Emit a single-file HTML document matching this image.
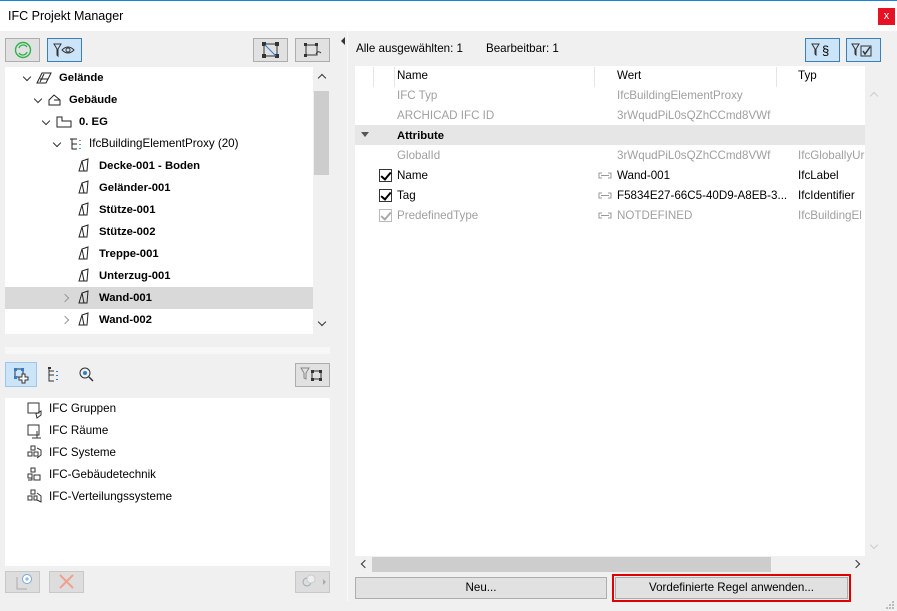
<!DOCTYPE html>
<html><head><meta charset="utf-8"><style>
*{margin:0;padding:0;box-sizing:border-box}
body{width:897px;height:611px;background:#f0f0f0;font-family:"Liberation Sans",sans-serif;font-size:11.6px;color:#000;position:relative;overflow:hidden}
.a{position:absolute}
.btn{position:absolute;background:#e1e1e1;border:1px solid #adadad}
.sel{background:#cce4f7;border:1px solid #3c7fb1}
.t{position:absolute;white-space:nowrap;line-height:14px}
.b{font-weight:bold;font-size:11.3px}
.g{color:#a0a0a0}
.chev{position:absolute;width:6px;height:6px;border-right:1.5px solid #333;border-bottom:1.5px solid #333;transform:rotate(45deg)}
.chr{position:absolute;width:6px;height:6px;border-right:1.5px solid #999;border-bottom:1.5px solid #999;transform:rotate(-45deg)}
.cb{position:absolute;width:13px;height:13px;border:1px solid #333;background:#fff}
.cb:after{content:"";position:absolute;left:3px;top:0px;width:4px;height:8px;border-right:2px solid #000;border-bottom:2px solid #000;transform:rotate(40deg)}
.cbg{border-color:#bbb}.cbg:after{border-color:#aaa}
</style></head><body>
<div class="a" style="left:0;top:0;width:897px;height:1px;background:#1883d7"></div>
<div class="a" style="left:0;top:1px;width:897px;height:30px;background:#fff"></div>
<div class="t" style="left:8px;top:9px;font-size:12.5px">IFC Projekt Manager</div>
<div class="a" style="left:878px;top:8px;width:17px;height:17px;background:#e81123;color:#fff;font-size:11px;text-align:center;line-height:16px">x</div>

<!-- left toolbar -->
<div class="btn" style="left:5px;top:38px;width:35px;height:24px"><svg width="33" height="22"><circle cx="17" cy="11" r="7.5" fill="none" stroke="#2db34a" stroke-width="1.4"/><path d="M13 9a4.5 4.5 0 0 1 8-1M21 13a4.5 4.5 0 0 1-8 1" fill="none" stroke="#2db34a" stroke-width="1.3"/></svg></div>
<div class="btn sel" style="left:47px;top:38px;width:35px;height:24px"><svg width="33" height="22"><path d="M6 5h7l-3 5v7l-1-1v-6z" fill="none" stroke="#333"/><path d="M14 11q6-6 12 0q-6 6-12 0z" fill="none" stroke="#333"/><circle cx="20" cy="11" r="2" fill="none" stroke="#333"/></svg></div>
<div class="btn" style="left:253px;top:38px;width:35px;height:24px"><svg width="33" height="22"><rect x="10" y="5" width="13" height="12" fill="none" stroke="#333"/><rect x="8" y="3" width="4" height="4" fill="#333"/><rect x="21" y="3" width="4" height="4" fill="#333"/><rect x="8" y="15" width="4" height="4" fill="#333"/><rect x="21" y="15" width="4" height="4" fill="#333"/><path d="M11 6l11 11" stroke="#2a7fd4"/></svg></div>
<div class="btn" style="left:295px;top:38px;width:35px;height:24px"><svg width="33" height="22"><rect x="10" y="6" width="11" height="10" fill="none" stroke="#333"/><rect x="8" y="4" width="3" height="3" fill="#333"/><rect x="19" y="4" width="3" height="3" fill="#333"/><rect x="8" y="15" width="3" height="3" fill="#333"/><path d="M20 15q2-4 5-1" fill="none" stroke="#333"/></svg></div>

<!-- tree -->
<div class="a" style="left:5px;top:67px;width:308px;height:267px;background:#fff"></div>
<div class="a" style="left:313px;top:67px;width:17px;height:267px;background:#f0f0f0"></div>
<div class="a" style="left:314px;top:91px;width:15px;height:84px;background:#cdcdcd"></div>
<div class="chev" style="left:319px;top:75px;transform:rotate(-135deg)"></div>
<div class="chev" style="left:319px;top:319px"></div>
<div class="a" style="left:5px;top:287px;width:308px;height:22px;background:#d9d9d9"></div>

<div class="chev" style="left:24px;top:74px"></div>
<svg class="a" style="left:36px;top:71px" width="16" height="14"><path d="M1 12l5-10h9l-5 10z M4 8h8M8 3l-4 8" fill="none" stroke="#222"/></svg>
<div class="t b" style="left:59px;top:71px">Gelände</div>
<div class="chev" style="left:35px;top:96px"></div>
<svg class="a" style="left:47px;top:93px" width="16" height="14"><path d="M2 12V7l5-5 6 5v5zM7 7h6" fill="none" stroke="#222"/></svg>
<div class="t b" style="left:69px;top:93px">Gebäude</div>
<div class="chev" style="left:43px;top:118px"></div>
<svg class="a" style="left:56px;top:115px" width="16" height="14"><path d="M1 12V2h5v4h9v6z" fill="none" stroke="#222"/></svg>
<div class="t b" style="left:79px;top:115px">0. EG</div>
<div class="chev" style="left:54px;top:140px"></div>
<svg class="a" style="left:68px;top:137px" width="14" height="14"><path d="M2 2h7M4 2v10h5M4 7h5" fill="none" stroke="#222"/><path d="M12 3v1M12 7v1M12 11v1" stroke="#2a7fd4" stroke-width="1.5"/></svg>
<div class="t" style="left:89px;top:137px">IfcBuildingElementProxy (20)</div>

<svg class="a" style="left:76px;top:158px" width="16" height="172" fill="none" stroke="#222">
<path d="M3 13l3-10 6-2-1 12z M6 3l2 10"/>
<path transform="translate(0,22)" d="M3 13l3-10 6-2-1 12z M6 3l2 10"/>
<path transform="translate(0,44)" d="M3 13l3-10 6-2-1 12z M6 3l2 10"/>
<path transform="translate(0,66)" d="M3 13l3-10 6-2-1 12z M6 3l2 10"/>
<path transform="translate(0,88)" d="M3 13l3-10 6-2-1 12z M6 3l2 10"/>
<path transform="translate(0,110)" d="M3 13l3-10 6-2-1 12z M6 3l2 10"/>
<path transform="translate(0,132)" d="M3 13l3-10 6-2-1 12z M6 3l2 10"/>
<path transform="translate(0,154)" d="M3 13l3-10 6-2-1 12z M6 3l2 10"/>
</svg>
<div class="t b" style="left:99px;top:159px">Decke-001 - Boden</div>
<div class="t b" style="left:99px;top:181px">Geländer-001</div>
<div class="t b" style="left:99px;top:203px">Stütze-001</div>
<div class="t b" style="left:99px;top:225px">Stütze-002</div>
<div class="t b" style="left:99px;top:247px">Treppe-001</div>
<div class="t b" style="left:99px;top:269px">Unterzug-001</div>
<div class="t b" style="left:99px;top:291px">Wand-001</div>
<div class="t b" style="left:99px;top:313px">Wand-002</div>
<div class="chr" style="left:62px;top:295px"></div>
<div class="chr" style="left:62px;top:317px"></div>

<div class="a" style="left:5px;top:347px;width:325px;height:7px;background:#f7f7f7"></div>

<!-- toolbar 2 -->
<div class="btn sel" style="left:5px;top:362px;width:32px;height:25px;border-color:#9dc6ec"><svg width="30" height="23"><rect x="9" y="6" width="8" height="8" fill="none" stroke="#333"/><rect x="8" y="5" width="3" height="3" fill="#2a7fd4"/><rect x="15" y="5" width="3" height="3" fill="#2a7fd4"/><rect x="8" y="13" width="3" height="3" fill="#2a7fd4"/><path d="M16 11h3v3h3v3h-3v3h-3v-3h-3v-3h3z" fill="#fff" stroke="#333"/></svg></div>
<svg class="a" style="left:45px;top:366px" width="16" height="18"><path d="M4 2v13h5M4 9h5M4 5h5" fill="none" stroke="#333"/><rect x="3" y="1" width="3" height="2" fill="#333"/><path d="M12 5v1M12 9v1M12 13v1" stroke="#2a7fd4" stroke-width="2"/></svg>
<svg class="a" style="left:78px;top:366px" width="16" height="16"><circle cx="7" cy="7" r="5" fill="none" stroke="#333"/><circle cx="7" cy="7" r="2" fill="#2a7fd4"/><path d="M11 11l4 4" stroke="#333" stroke-width="1.5"/></svg>
<div class="btn" style="left:295px;top:363px;width:35px;height:24px"><svg width="33" height="22"><path d="M5 4h8l-3 5v6l-2-1v-5z" fill="none" stroke="#888"/><rect x="16" y="7" width="9" height="8" fill="none" stroke="#333"/><rect x="15" y="6" width="3" height="3" fill="#333"/><rect x="23" y="6" width="3" height="3" fill="#333"/><rect x="15" y="14" width="3" height="3" fill="#333"/><rect x="23" y="14" width="3" height="3" fill="#333"/></svg></div>

<div class="a" style="left:5px;top:398px;width:325px;height:168px;background:#fff"></div>
<svg class="a" style="left:26px;top:401px" width="18" height="104"><g fill="none" stroke="#333">
<rect x="2" y="2" width="11" height="10"/><path d="M10 13l5-3v4l-4 3z"/>
<rect x="2" y="24" width="11" height="10"/><path d="M6 37h9M11 30v7"/>
<path d="M5 45h4v4H5zM2 51h4v4H2zM8 51h4v4H8zM11 47l4 2v5l-4 3"/>
<path d="M5 67h4v4H5zM2 73h4v4H2zM8 74h6v5H8zM2 79h4v-2"/>
<path d="M5 89h4v4H5zM2 95h4v4H2zM8 95h3v4H8zM11 92l4 3v6l-4-2"/>
</g></svg>
<div class="t" style="left:49px;top:402px">IFC Gruppen</div>
<div class="t" style="left:49px;top:424px">IFC Räume</div>
<div class="t" style="left:49px;top:446px">IFC Systeme</div>
<div class="t" style="left:49px;top:468px">IFC-Gebäudetechnik</div>
<div class="t" style="left:49px;top:490px">IFC-Verteilungssysteme</div>

<div class="btn" style="left:5px;top:571px;width:35px;height:22px;background:#ddd;border-color:#c8c8c8"><svg width="33" height="20"><path d="M11 5v12h10" fill="none" stroke="#aaa"/><circle cx="21" cy="7" r="4.5" fill="#fff" stroke="#7aa8d8"/><path d="M21 5v4M19 7h4" stroke="#7aa8d8"/></svg></div>
<div class="btn" style="left:49px;top:571px;width:35px;height:22px;background:#ddd;border-color:#c8c8c8"><svg width="33" height="20"><path d="M10 3l13 13M23 3L10 16" stroke="#f0a090" stroke-width="2"/></svg></div>
<div class="btn" style="left:295px;top:571px;width:35px;height:22px;background:#ddd;border-color:#c8c8c8"><svg width="33" height="20"><circle cx="11" cy="10" r="4" fill="none" stroke="#9ab"/><circle cx="15" cy="7" r="4" fill="#eee" stroke="#ccc"/><path d="M27 7v6l3-3z" fill="#aaa"/></svg></div>

<!-- splitter -->
<div class="a" style="left:339px;top:31px;width:8px;height:570px;background:#f0f0f0"></div>
<div class="a" style="left:347px;top:31px;width:1px;height:570px;background:#fafafa"></div>
<svg class="a" style="left:340px;top:37px" width="6" height="8"><path d="M5 0v8L1 4z" fill="#333"/></svg>

<!-- right -->
<div class="t" style="left:356px;top:42px">Alle ausgewählten: 1</div>
<div class="t" style="left:486px;top:42px">Bearbeitbar: 1</div>
<div class="btn sel" style="left:805px;top:38px;width:35px;height:24px"><svg width="33" height="22"><path d="M6 5h7l-3 5v6l-1-1v-5z" fill="none" stroke="#333"/><text x="16" y="16" font-family="Liberation Sans" font-size="13">§</text></svg></div>
<div class="btn sel" style="left:846px;top:38px;width:35px;height:24px"><svg width="33" height="22"><path d="M5 5h7l-3 5v6l-1-1v-5z" fill="none" stroke="#333"/><rect x="14" y="7" width="10" height="10" fill="none" stroke="#333"/><path d="M16 12l2 3 5-7" fill="none" stroke="#333" stroke-width="1.5"/></svg></div>

<div class="a" style="left:355px;top:66px;width:510px;height:490px;background:#fff"></div>
<div class="a" style="left:373px;top:67px;width:1px;height:20px;background:#e5e5e5"></div>
<div class="a" style="left:394px;top:67px;width:1px;height:20px;background:#e5e5e5"></div>
<div class="a" style="left:594px;top:67px;width:1px;height:20px;background:#e5e5e5"></div>
<div class="a" style="left:776px;top:67px;width:1px;height:20px;background:#e5e5e5"></div>
<div class="t" style="left:397px;top:69px">Name</div>
<div class="t" style="left:617px;top:69px">Wert</div>
<div class="t" style="left:798px;top:69px">Typ</div>
<div class="t g" style="left:397px;top:89px">IFC Typ</div>
<div class="t g" style="left:617px;top:89px">IfcBuildingElementProxy</div>
<div class="t g" style="left:397px;top:109px">ARCHICAD IFC ID</div>
<div class="t g" style="left:617px;top:109px">3rWqudPiL0sQZhCCmd8VWf</div>
<div class="a" style="left:355px;top:125px;width:510px;height:20px;background:#e6e6e6"></div>
<svg class="a" style="left:361px;top:132px" width="8" height="6"><path d="M0 0h8L4 5z" fill="#555"/></svg>
<div class="t b" style="left:397px;top:129px">Attribute</div>
<div class="t g" style="left:397px;top:149px">GlobalId</div>
<div class="t g" style="left:617px;top:149px">3rWqudPiL0sQZhCCmd8VWf</div>
<div class="t g" style="left:798px;top:149px">IfcGloballyUr</div>
<div class="cb" style="left:379px;top:169px"></div>
<div class="t" style="left:397px;top:169px">Name</div>
<div class="t" style="left:617px;top:169px">Wand-001</div>
<div class="t" style="left:798px;top:169px">IfcLabel</div>
<div class="cb" style="left:379px;top:189px"></div>
<div class="t" style="left:397px;top:189px">Tag</div>
<div class="t" style="left:617px;top:189px">F5834E27-66C5-40D9-A8EB-3...</div>
<div class="t" style="left:798px;top:189px">IfcIdentifier</div>
<div class="cb cbg" style="left:379px;top:209px"></div>
<div class="t g" style="left:397px;top:209px">PredefinedType</div>
<div class="t g" style="left:617px;top:209px">NOTDEFINED</div>
<div class="t g" style="left:798px;top:209px">IfcBuildingEl</div>
<svg class="a" style="left:597px;top:170px" width="16" height="50" fill="none" stroke="#999"><path d="M5 3H2v5h3M4 5.5h8M11 3h3v5h-3"/><path transform="translate(0,20)" d="M5 3H2v5h3M4 5.5h8M11 3h3v5h-3"/><path transform="translate(0,40)" d="M5 3H2v5h3M4 5.5h8M11 3h3v5h-3"/></svg>

<div class="a" style="left:865px;top:66px;width:16px;height:490px;background:#f0f0f0"></div>
<div class="chev" style="left:871px;top:93px;transform:rotate(-135deg);border-color:#ccc"></div>
<div class="chev" style="left:871px;top:542px;border-color:#ccc"></div>

<div class="a" style="left:355px;top:556px;width:510px;height:16px;background:#f0f0f0"></div>
<div class="a" style="left:372px;top:557px;width:399px;height:15px;background:#cdcdcd"></div>
<div class="chev" style="left:362px;top:561px;transform:rotate(135deg)"></div>
<div class="chev" style="left:853px;top:561px;transform:rotate(-45deg)"></div>

<div class="btn" style="left:355px;top:577px;width:252px;height:22px;text-align:center;line-height:20px">Neu...</div>
<div class="a" style="left:612px;top:574px;width:239px;height:28px;border:2px solid #e00000"></div>
<div class="btn" style="left:615px;top:577px;width:233px;height:22px;text-align:center;line-height:20px">Vordefinierte Regel anwenden...</div>
<svg class="a" style="left:884px;top:599px" width="11" height="11"><g fill="#bbb"><rect x="8" y="2" width="2" height="2"/><rect x="5" y="5" width="2" height="2"/><rect x="8" y="5" width="2" height="2"/><rect x="2" y="8" width="2" height="2"/><rect x="5" y="8" width="2" height="2"/><rect x="8" y="8" width="2" height="2"/></g></svg>
</body></html>
